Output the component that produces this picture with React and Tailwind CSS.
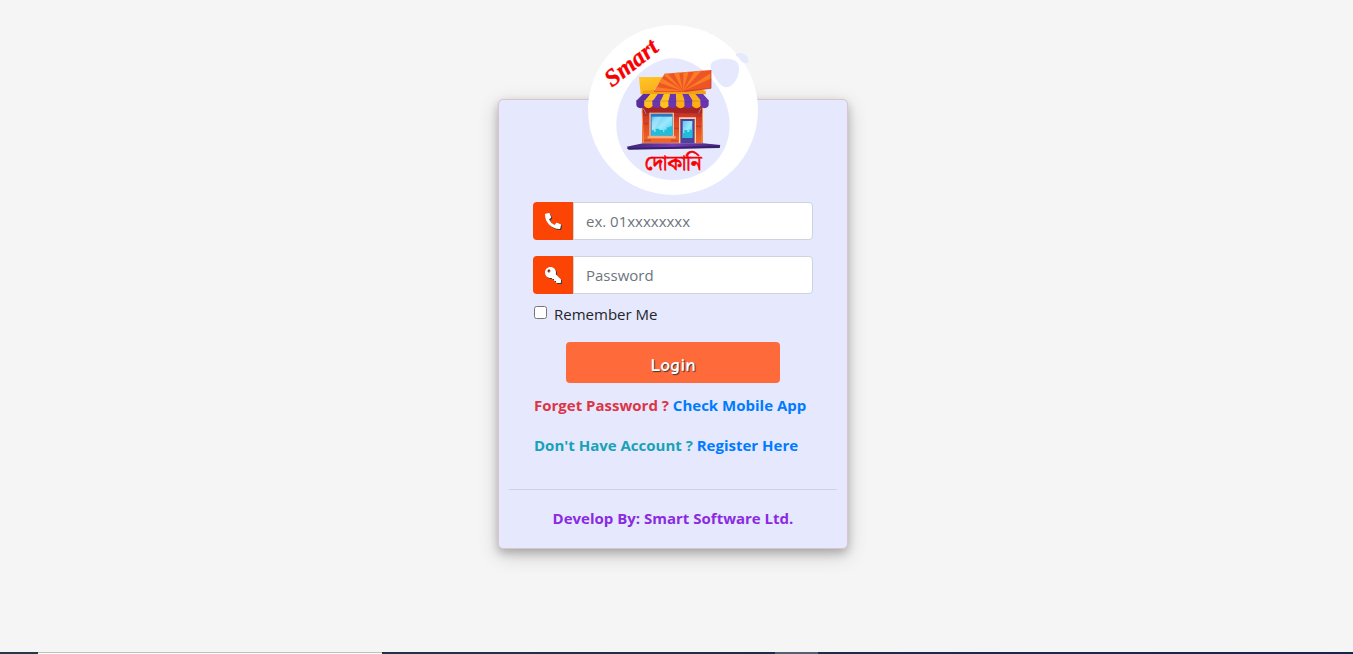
import { useState } from 'react';
import { FaPhoneAlt, FaKey } from 'react-icons/fa';

const AWNING_STRIPES = [
  { fill: '#5b2d9e', points: '180,222 203,222 186,242 160,242' },
  { fill: '#ffc21a', points: '203,222 224,222 210,242 186,242' },
  { fill: '#6a35ae', points: '224,222 243,222 234,242 210,242' },
  { fill: '#ffc21a', points: '243,222 261,222 257,242 234,242' },
  { fill: '#6a35ae', points: '261,222 279,222 281,242 257,242' },
  { fill: '#ffb010', points: '279,222 298,222 305,242 281,242' },
  { fill: '#6a35ae', points: '298,222 317,222 330,242 305,242' },
  { fill: '#ffb010', points: '317,222 337,222 354,242 330,242' },
  { fill: '#6a35ae', points: '337,222 360,222 378,242 354,242' },
];

function Logo() {
  return (
    <svg viewBox="15 15 510 510" role="img" aria-label="Smart Dokani" className="block w-[170px] h-[170px]">
      <defs>
        <linearGradient id="sign" x1="0" y1="0" x2="1" y2="1">
          <stop offset="0" stopColor="#ffc726" />
          <stop offset="1" stopColor="#f79a16" />
        </linearGradient>
        <linearGradient id="wall" x1="0" y1="0" x2="0" y2="1">
          <stop offset="0" stopColor="#b52a26" />
          <stop offset="0.45" stopColor="#dc4426" />
          <stop offset="1" stopColor="#f06a28" />
        </linearGradient>
        <linearGradient id="glass" x1="0" y1="0" x2="1" y2="1">
          <stop offset="0" stopColor="#5cc3f5" />
          <stop offset="0.5" stopColor="#9be8fb" />
          <stop offset="1" stopColor="#35cff0" />
        </linearGradient>
        <linearGradient id="floor" x1="0" y1="0" x2="1" y2="0">
          <stop offset="0" stopColor="#3d2475" />
          <stop offset="0.5" stopColor="#7a3db8" />
          <stop offset="1" stopColor="#43257e" />
        </linearGradient>
        <clipPath id="roof">
          <path d="M245 161 L384 150 V205 L305 216 H212 Z" />
        </clipPath>
      </defs>

      <circle cx="270" cy="270" r="255" fill="#fff" />
      <path d="M270 115 C350 115 440 210 440 315 C440 410 364 480 270 480 C176 480 100 410 100 315 C100 210 190 115 270 115 Z" fill="#e6e8fe" />
      <path d="M383 136 C385 111 456 110 465 130 C476 158 455 202 431 202 C412 202 401 180 389 160 C384 151 382 143 383 136 Z" fill="#e6e8fe" />
      <path d="M458 103 C466 95 487 99 493 110 C497 119 498 128 494 129 C480 131 474 126 469 115 C465 109 457 108 458 103 Z" fill="#e6e8fe" />

      {/* Floor */}
      <path d="M131 380 L180 370 H360 L412 375 L409 383 L138 388 Z" fill="url(#floor)" />
      <path d="M131 384 L411 377 L410 384 L137 389 Z" fill="#35206b" />

      {/* Walls */}
      <rect x="177" y="258" width="183" height="111" fill="url(#wall)" />
      <path d="M177 263 H360 V280 H177 Z" fill="#9d2026" opacity="0.7" />
      <path d="M180 285 h17 M182 311 h14 M272 287 h18 M274 325 h16 M182 361 h22 M338 287 h18 M340 319 h15 M264 362 h20" stroke="#a82c24" strokeWidth="5" opacity="0.5" />
      <path d="M177 263 L181 369 M359 262 L357 368" stroke="#ff9a50" strokeWidth="3" />

      {/* Window */}
      <rect x="199" y="278" width="74" height="72" fill="#ffbd92" />
      <rect x="203" y="281" width="66" height="66" fill="#2a78c4" />
      <rect x="206" y="290" width="62" height="56" fill="url(#glass)" />
      <path d="M206 343 V331 H213 V335 H218 V326 H229 V330 H240 V337 H244 V329 H251 V322 H260 V319 H268 V346 H206 Z" fill="#22bdd9" />
      <path d="M216 290 L236 290 L215 325 L206 331 V307 Z" fill="#fff" opacity="0.25" />
      <path d="M194 352 H278" stroke="#ffb181" strokeWidth="6" />

      {/* Door */}
      <path d="M288 292 H339 V369 H335 V297 H292 V369 H288 Z" fill="#ffd0a7" />
      <rect x="293" y="297" width="41" height="73" fill="#4e419d" />
      <rect x="299" y="303" width="29" height="51" fill="url(#glass)" />
      <path d="M299 339 H304 V330 H313 V336 H319 V329 H328 V354 H299 Z" fill="#20bddb" />

      {/* Sign and roof */}
      <path d="M168 171 H241 L212 212 H368 L369 223 H173 Z" fill="url(#sign)" />
      <path d="M216 209 H362 V222 H180 V213 Z" fill="#eea016" />
      <g clipPath="url(#roof)">
        <rect x="205" y="145" width="185" height="75" fill="#ef5424" />
        <g fill="#f97c26">
          <path d="M300 213 L232 157 L250 157 Z" />
          <path d="M300 213 L268 150 L286 148 Z" />
          <path d="M300 213 L302 145 L320 145 Z" />
          <path d="M300 213 L340 145 L362 145 Z" />
          <path d="M300 213 L390 155 L390 173 Z" />
          <path d="M300 213 L208 181 L222 166 Z" />
          <path d="M300 213 L205 199 L205 213 Z" />
        </g>
      </g>
      <path d="M384 150 V205 L305 214" fill="none" stroke="#bd2b2d" strokeWidth="2" />

      {/* Awning */}
      {AWNING_STRIPES.map((stripe, i) => (
        <g key={i} fill={stripe.fill}>
          <polygon points={stripe.points} />
          <path d={`M${160 + i * 24} 241 h25 v12 a12 11 0 0 1 -25 0 Z`} />
        </g>
      ))}
      <path d="M161 243 H377" stroke="#35155f" strokeWidth="3" opacity="0.2" />
      <path d="M181 265 L189 281 M354 265 L347 279" stroke="#a28396" strokeWidth="3" />

      <text
        transform="translate(87 203) rotate(-38)"
        fill="#f80000"
        stroke="#f80000"
        strokeWidth="1"
        fontSize="73"
        fontWeight="700"
        fontStyle="italic"
        fontFamily="'Liberation Serif', serif"
      >
        Smart
      </text>
      <text
        x="270"
        y="450"
        textAnchor="middle"
        fill="#f80000"
        stroke="#f80000"
        strokeWidth="2"
        fontSize="62"
        fontFamily="'Noto Serif Bengali', 'Noto Sans Bengali', 'Lohit Bengali', FreeSans, serif"
      >
        দোকানি
      </text>
    </svg>
  );
}

function Field({ id, label, icon, ...props }) {
  return (
    <div className="flex h-[38px] mb-4">
      <label htmlFor={id} aria-label={label} className="w-10 shrink-0 flex items-center justify-center rounded-l-[4px] bg-[#fc4404] text-white">
        <span className="drop-shadow-[1px_1px_0_#343a40]">{icon}</span>
      </label>
      <input
        id={id}
        className="flex-1 min-w-0 px-3 bg-white border border-[#ced4da] rounded-r-[4px] text-[15px] text-[#495057] placeholder:text-[#6c757d] outline-none focus:border-[#80bdff]"
        {...props}
      />
    </div>
  );
}

function App() {
  const [phone, setPhone] = useState('');
  const [password, setPassword] = useState('');
  const [remember, setRemember] = useState(false);

  return (
    <div className="min-h-screen flex flex-col bg-[#f5f5f5] font-['Open_Sans','Noto_Sans',sans-serif] text-[15px] leading-6 text-[#212529]">
      <main className="flex-1 flex justify-center items-start pt-[99px] pr-[7px] pb-8">
        <div className="w-[350px] px-[10px] pb-[18px] bg-[#e6e8fe] border border-[#d9c5cb] rounded-[5px] shadow-[0_4px_8px_0_rgba(0,0,0,0.2),0_6px_20px_0_rgba(0,0,0,0.19)]">
          <div className="-mt-[75px] mb-[7px] flex justify-center">
            <Logo />
          </div>

          <form className="px-6" onSubmit={(e) => e.preventDefault()}>
            <Field id="phone" label="Phone" icon={<FaPhoneAlt size={16} />} type="text" placeholder="ex. 01xxxxxxxx" value={phone} onChange={(e) => setPhone(e.target.value)} />
            <Field id="password" label="Password" icon={<FaKey size={16} className="-scale-x-100" />} type="password" placeholder="Password" value={password} onChange={(e) => setPassword(e.target.value)} />

            <div className="-mt-2 flex items-start gap-[7px] pl-px">
              <input id="remember" type="checkbox" className="mt-1 w-[13px] h-[13px]" checked={remember} onChange={(e) => setRemember(e.target.checked)} />
              <label htmlFor="remember">Remember Me</label>
            </div>

            <div className="mt-4 px-[33px]">
              <button type="submit" className="w-full h-[41px] pt-1 rounded-[4px] bg-[#ff6a3a] text-white text-[19px] font-bold font-['Comic_Neue','Lato',sans-serif] [text-shadow:1px_1px_1px_#343a40]">
                Login
              </button>
            </div>

            <div className="mt-[10px] pl-px font-bold whitespace-nowrap">
              <p className="mb-4 text-[#dc3545]">
                Forget Password ? <a href="#app" className="text-[#007bff]">Check Mobile App</a>
              </p>
              <p className="text-[#17a2b8]">
                Don't Have Account ? <a href="#register" className="text-[#007bff]">Register Here</a>
              </p>
            </div>
          </form>

          <hr className="mt-8 mb-4 border-[#cfd1e5]" />
          <p className="text-center font-bold text-[#8a2be2]">Develop By: Smart Software Ltd.</p>
        </div>
      </main>

      {/* Bottom strip */}
      <div className="h-[2px] flex bg-linear-to-r from-[#233b45] to-[#16244a]">
        <div className="w-[38px]" />
        <div className="w-[344px] bg-white border-t border-[#c0c0c0]" />
        <div className="w-[393px]" />
        <div className="w-[43px] bg-[#53626e]" />
      </div>
    </div>
  );
}

export default App;
